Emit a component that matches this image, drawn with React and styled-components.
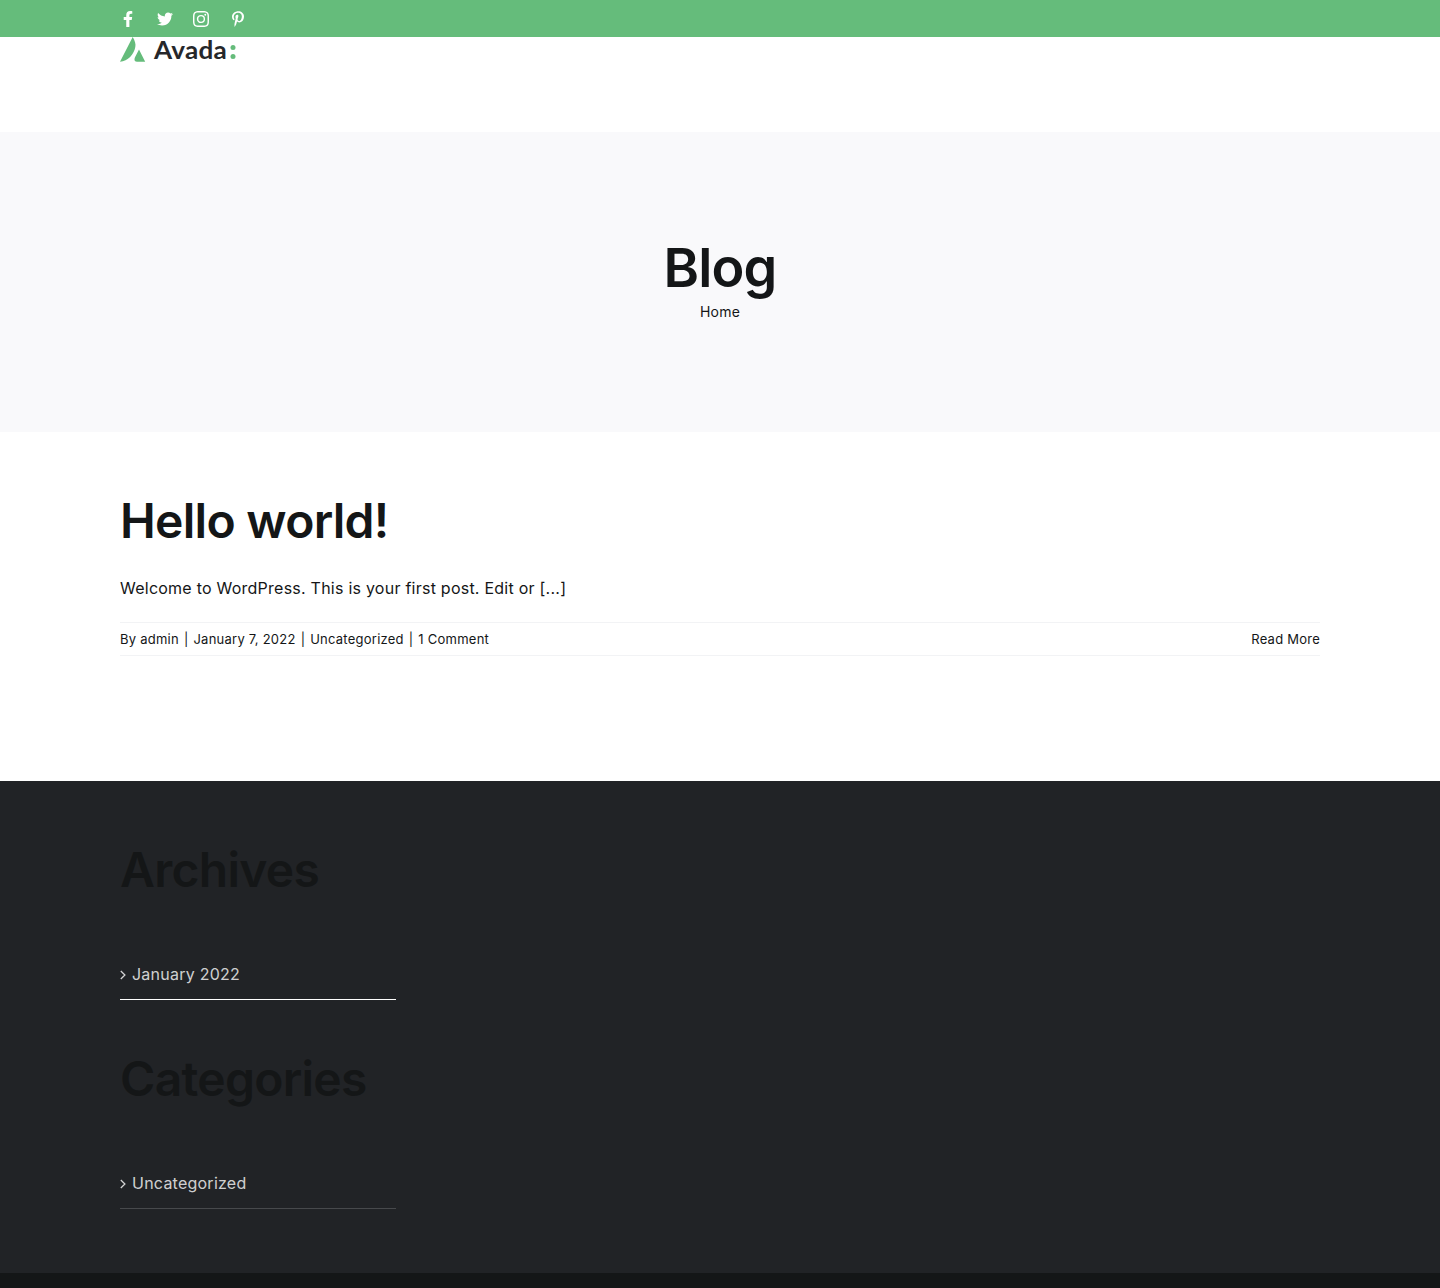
import React from "react";
import styled, { createGlobalStyle } from "styled-components";
import { FaFacebookF, FaTwitter, FaPinterestP } from "react-icons/fa";
import { BsInstagram } from "react-icons/bs";

const GlobalStyle = createGlobalStyle`
  *, *::before, *::after { box-sizing: border-box; }
  body {
    margin: 0;
    background: #fff;
    color: #141617;
    font-family: Inter, sans-serif;
    font-size: 16px;
    line-height: 27.52px;
    letter-spacing: 0.24px;
    -webkit-font-smoothing: antialiased;
  }
  a { color: inherit; text-decoration: none; }
`;

const Container = styled.div`
  width: 1200px;
  margin: 0 auto;
`;

const TopBar = styled.div`
  height: 37px;
  background: #65bc7b;
  color: #fff;
`;

const SocialList = styled(Container)`
  display: flex;
  align-items: center;
  height: 37px;
  gap: 20.5px;
`;

const SocialLink = styled.a`
  display: flex;
  width: 16px;
  height: 16px;
  svg { width: 16px; height: 16px; }
`;

const Header = styled.header`
  height: 95px;
`;

const LogoLink = styled.a`
  display: block;
  width: 116px;
  height: 25px;
  svg { display: block; }
`;

const TitleBar = styled.section`
  height: 300px;
  background: #f9f9fb;
  display: flex;
  flex-direction: column;
  align-items: center;
  justify-content: center;
`;

const PageTitle = styled.h1`
  margin: 0;
  font-size: 54px;
  font-weight: 600;
  line-height: 60px;
  letter-spacing: -0.81px;
`;

const Breadcrumb = styled.a`
  font-size: 14px;
  line-height: 28px;
`;

const Main = styled(Container)`
  height: 349px;
  padding-top: 60px;
`;

const Heading = styled.h2`
  margin: 0;
  font-size: 48px;
  font-weight: 600;
  line-height: 57.6px;
  letter-spacing: -0.72px;
`;

const Excerpt = styled.p`
  margin: 25px 0 20px;
`;

const MetaRow = styled.div`
  display: flex;
  justify-content: space-between;
  height: 34px;
  border-top: 1px solid #f2f3f5;
  border-bottom: 1px solid #f2f3f5;
  font-size: 13px;
  line-height: 32px;
`;

const Separator = styled.span`
  padding: 0 5px;
`;

const Footer = styled.footer`
  height: 492px;
  background: #212326;
  padding-top: 60px;
`;

const Widget = styled.section`
  width: 276px;
  height: 209px;
`;

const WidgetItem = styled.a`
  display: flex;
  align-items: center;
  gap: 6px;
  height: 49px;
  margin-top: 52px;
  border-bottom: 1px solid ${(p) => p.$line};
  color: rgba(255, 255, 255, 0.8);
`;

const Copyright = styled.div`
  height: 15px;
  background: #141617;
`;

const Chevron = () => (
  <svg width="6" height="10" viewBox="0 0 6 10" fill="none" stroke="currentColor" strokeWidth="1.3">
    <path d="M.8 1 4.9 5 .8 9" />
  </svg>
);

const Logo = () => (
  <svg width="116" height="25" viewBox="0 0 116 25">
    <path fill="#65bc7b" d="M12.7 0C15 4 16 7 15.3 10 14 17 8 24.5 0 24.8z" />
    <path fill="#65bc7b" d="M19 12.5 25.2 24.8H17c-3 0-3-3-1.500-5.500z" />
    <text x="34" y="21.500" fill="#26272a" fontFamily="Lato, sans-serif" fontWeight="700" fontSize="24.500" textLength="73" lengthAdjust="spacingAndGlyphs">Avada</text>
    <circle cx="113" cy="10.600" r="2.500" fill="#65bc7b" />
    <circle cx="113" cy="19.600" r="2.500" fill="#65bc7b" />
  </svg>
);

const socials = [
  ["Facebook", FaFacebookF],
  ["Twitter", FaTwitter],
  ["Instagram", BsInstagram],
  ["Pinterest", FaPinterestP],
];

const meta = ["By admin", "January 7, 2022", "Uncategorized", "1 Comment"];

const widgets = [
  { title: "Archives", item: "January 2022", line: "#fff" },
  { title: "Categories", item: "Uncategorized", line: "#47494c" },
];

export default function App() {
  return (
    <>
      <GlobalStyle />
      <TopBar>
        <SocialList>
          {socials.map(([name, Icon]) => (
            <SocialLink key={name} href="#"><Icon /></SocialLink>
          ))}
        </SocialList>
      </TopBar>
      <Header>
        <Container><LogoLink href="#"><Logo /></LogoLink></Container>
      </Header>
      <TitleBar>
        <PageTitle>Blog</PageTitle>
        <Breadcrumb href="#">Home</Breadcrumb>
      </TitleBar>
      <Main as="main">
        <Heading>Hello world!</Heading>
        <Excerpt>Welcome to WordPress. This is your first post. Edit or [...]</Excerpt>
        <MetaRow>
          <div>
            {meta.map((text, i) => (
              <React.Fragment key={text}>
                {i > 0 && <Separator>|</Separator>}
                <span>{text}</span>
              </React.Fragment>
            ))}
          </div>
          <a href="#">Read More</a>
        </MetaRow>
      </Main>
      <Footer>
        <Container>
          {widgets.map((w) => (
            <Widget key={w.title}>
              <Heading>{w.title}</Heading>
              <WidgetItem href="#" $line={w.line}><Chevron />{w.item}</WidgetItem>
            </Widget>
          ))}
        </Container>
      </Footer>
      <Copyright />
    </>
  );
}
